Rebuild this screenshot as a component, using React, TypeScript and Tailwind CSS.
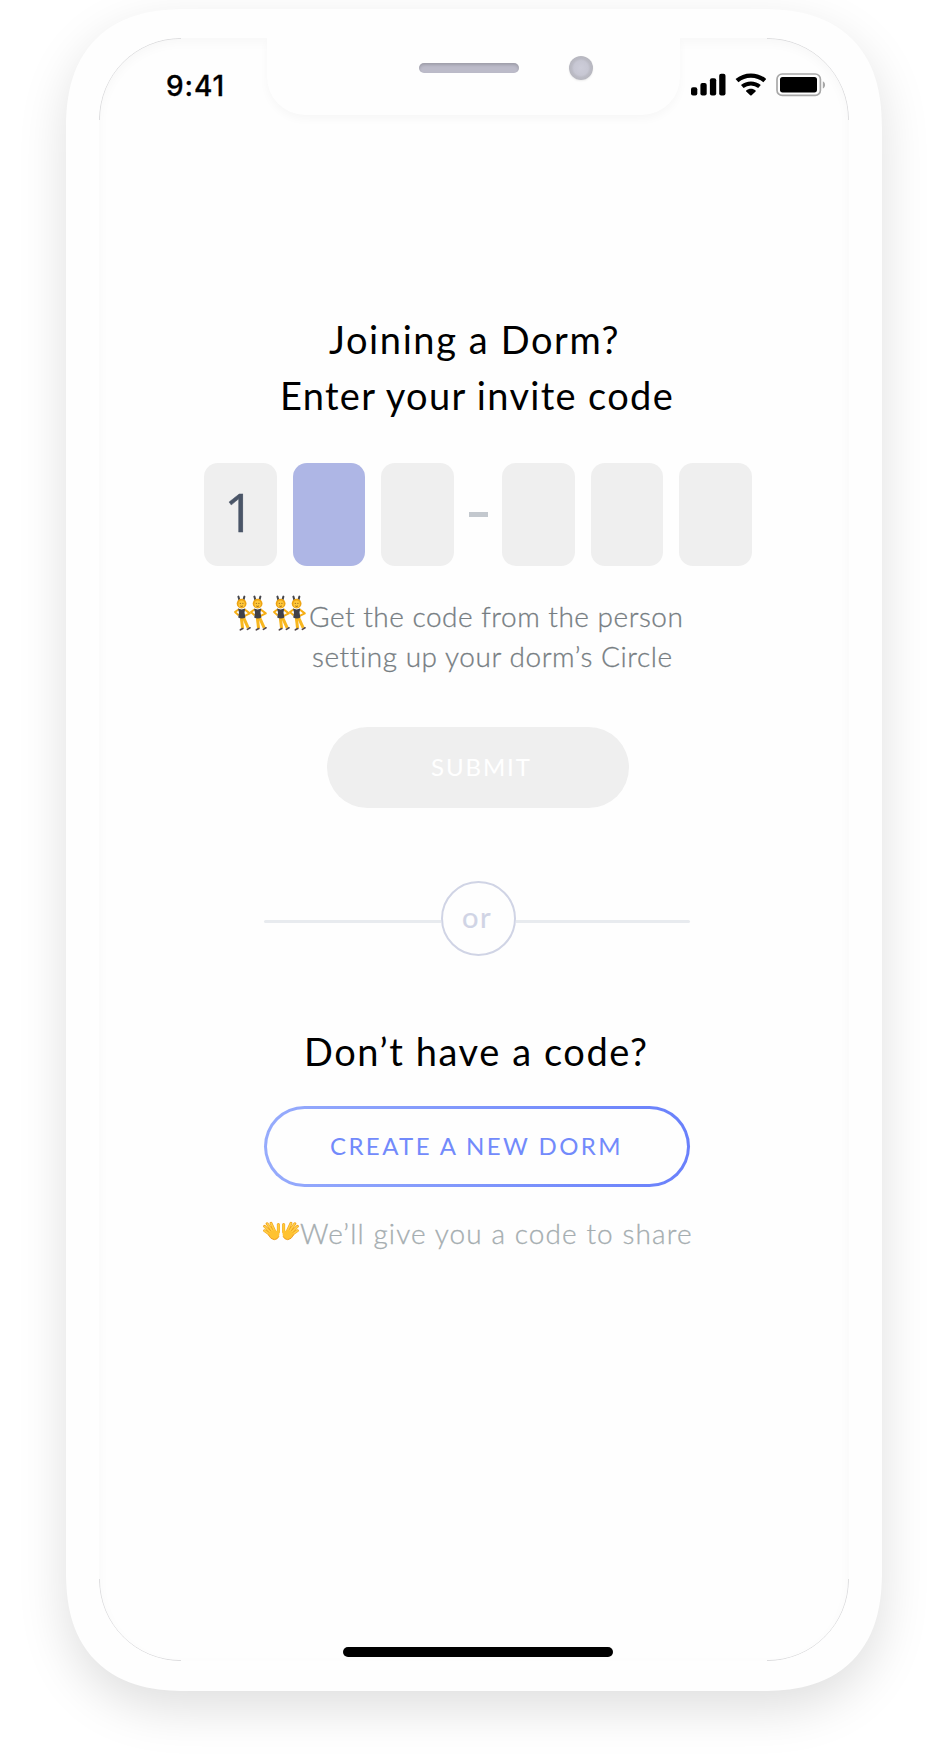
function SignalIcon() {
  return (
    <svg width="35" height="23" viewBox="0 0 35 23" className="block">
      <rect x="0" y="14.2" width="6.3" height="8.3" rx="2" />
      <rect x="9.4" y="10" width="6.3" height="12.5" rx="2" />
      <rect x="18.9" y="5.2" width="6.3" height="17.3" rx="2" />
      <rect x="28.2" y="0.8" width="6.3" height="21.7" rx="2" />
    </svg>
  );
}

function WifiIcon() {
  return (
    <svg width="32" height="23" viewBox="0 0 32 23" className="block">
      <path d="M2 7.7C9.8 .9 22 .9 29.8 7.7" fill="none" stroke="#000" strokeWidth="4.4" />
      <path d="M7.3 13.6C12.2 9.4 19.6 9.4 24.5 13.6" fill="none" stroke="#000" strokeWidth="4" />
      <path d="M11.2 17.4c2.7-2.2 6.7-2.2 9.4 0 .3.3.3.7 0 1l-4 3.8c-.4.4-1 .4-1.4 0l-4-3.8c-.3-.3-.3-.7 0-1z" />
    </svg>
  );
}

function BatteryIcon() {
  return (
    <svg width="50" height="24" viewBox="0 0 50 24" className="block">
      <rect x="1" y="1" width="43.4" height="21.4" rx="5.2" fill="none" stroke="#a8a8a8" strokeWidth="1.7" />
      <rect x="4" y="4" width="37" height="15.4" rx="2.6" />
      <path d="M46.8 8.2c3 1.4 3 6 0 7.4z" fill="#a8a8a8" />
    </svg>
  );
}

function Dancer({ x }: { x: number }) {
  return (
    <g transform={`translate(${x} 0)`}>
      <path d="M5.4 1.6l1 3.6M11.4 1.6l-1 3.6" stroke="#45454b" strokeWidth="2" fill="none" strokeLinecap="round" />
      <path d="M5.8 14.2L2 17l3.6 3.4" stroke="#f6ae14" strokeWidth="1.9" fill="none" strokeLinejoin="round" />
      <path d="M11.4 14.2l5.4 4.2-5 2.4" stroke="#f6ae14" strokeWidth="2" fill="none" strokeLinejoin="round" />
      <path d="M8.2 21.5l1.4 12" stroke="#f8b71f" strokeWidth="3" fill="none" />
      <path d="M10 21.5l5.2 11.3" stroke="#f8b71f" strokeWidth="3" fill="none" />
      <circle cx="8.6" cy="8.6" r="4.9" fill="#eda312" />
      <ellipse cx="8.6" cy="9" rx="3.2" ry="3.5" fill="#ffc83a" />
      <path d="M6.8 8.4h1M9.4 8.4h1M7.4 11q1.2.8 2.4 0" stroke="#80501a" strokeWidth=".9" fill="none" />
      <path d="M5 13.6q3.6 1.6 7.2 0l-.7 3.8.9 5.2q-3.6 1.8-7.2 0l.8-5.2z" fill="#414148" />
      <path d="M7.4 34.8l2.4-1.2M14.4 34.4l2.6-1.6" stroke="#55494a" strokeWidth="1.7" strokeLinecap="round" />
    </g>
  );
}

function DancersIcon() {
  return (
    <svg width="75" height="37" viewBox="0 0 75 37" className="block shrink-0">
      <Dancer x={0} />
      <Dancer x={16} />
      <Dancer x={39} />
      <Dancer x={55} />
    </svg>
  );
}

function Hand() {
  return (
    <g strokeLinecap="round">
      <path d="M15.8 11V3.4" stroke="#f2a51c" strokeWidth="3.1" />
      <path d="M15.8 11V3.6" stroke="#ffca3a" strokeWidth="2" />
      <path d="M7 13.5L1.6 9.6M8 11.5L1.6 5.2M10 10.5L4.2 2.4M12 10L8.2 2" stroke="#f0a01c" strokeWidth="2.9" />
      <path d="M7 13.5L1.7 9.7M8 11.5L1.8 5.4M10 10.5L4.4 2.6M12 10L8.3 2.2" stroke="#ffcf45" strokeWidth="1.7" />
      <path d="M5.6 12.4L11.4 8.4q2 1.6 5.2 1.6.8 4-.8 6.6-1.9 2.8-5.2 2Q7 17.4 5.6 12.4z" fill="#ffc231" />
      <path d="M5.6 14.2q2.2 4.4 6 4.7 3.4-.2 4.7-3.2" fill="none" stroke="#ee9b1d" strokeWidth="1" />
    </g>
  );
}

function OpenHandsIcon() {
  return (
    <svg width="36" height="21" viewBox="0 0 37 21" className="block shrink-0" fill="none">
      <Hand />
      <g transform="translate(37 0) scale(-1 1)">
        <Hand />
      </g>
    </svg>
  );
}

function CornerLines() {
  return (
    <svg
      width="750"
      height="1623"
      viewBox="0 0 750 1623"
      className="pointer-events-none absolute left-0 top-0"
      fill="none"
      stroke="#cdcdd0"
      strokeWidth=".7"
    >
      <path d="M.4 82A81 81 0 0 1 82 .4M668 .4A81 81 0 0 1 749.6 82M749.6 1541A81 81 0 0 1 668 1622.6M82 1622.6A81 81 0 0 1 .4 1541" />
    </svg>
  );
}

function CodeBox({ digit, active }: { digit?: string; active?: boolean }) {
  return (
    <div
      className={
        "flex h-[103px] w-[72.6px] items-center justify-center rounded-[14px] font-['Open_Sans',sans-serif] text-[53px] leading-none text-[#4a5567] [-webkit-text-stroke:0.4px_#4a5567] " +
        (active ? "bg-[#aeb6e5]" : "bg-[#efefef]")
      }
    >
      {digit && <span className="-mt-1.5 pr-0.5">{digit}</span>}
    </div>
  );
}

export default function App() {
  return (
    <div className="h-[1759px] w-[941px] overflow-hidden bg-white pl-[66px] pt-[9px] font-['Lato',sans-serif]">
      <div className="h-[1682px] w-[816px] rounded-[104px] bg-[#fefefe] pl-[33px] pt-[29px] shadow-[0_18px_50px_rgba(0,0,0,0.13)] supports-[corner-shape:squircle]:rounded-[120px] supports-[corner-shape:squircle]:[corner-shape:superellipse(1.27)]">
        <div className="relative flex h-[1623px] w-[750px] flex-col items-start overflow-hidden rounded-[82px] bg-[#fefefe] shadow-[inset_0_4px_12px_rgba(0,0,0,0.03)]">
          <CornerLines />
          <div className="absolute left-[168px] top-0 h-[77px] w-[413px] rounded-b-[38px] bg-[#fefefe] shadow-[0_4px_10px_rgba(0,0,0,0.03)]">
            <div className="absolute left-[152px] top-[25px] h-[10px] w-[100px] rounded-full bg-[#bcbbc9] shadow-[inset_0_2px_3px_rgba(0,0,0,0.16)]" />
            <div className="absolute left-[302px] top-[18px] h-6 w-6 rounded-full bg-[radial-gradient(circle_closest-side,#cdcdd9_0,#c7c7d3_60%,#bbbbc5_78%,#b7b7bf_100%)] shadow-[0_1px_2px_rgba(0,0,0,0.08)]" />
          </div>
          <div className="flex h-[77px] w-full items-start">
            <span className="ml-[67px] mt-[31px] w-[60px] font-['Inter',sans-serif] text-[28px] font-medium leading-[34px] tracking-[0.9px] text-black [-webkit-text-stroke:0.3px_#000]">
              9:41
            </span>
            <div className="ml-[465px] mt-[35px] flex items-start">
              <SignalIcon />
              <div className="ml-[9px]">
                <WifiIcon />
              </div>
              <div className="ml-[9px]">
                <BatteryIcon />
              </div>
            </div>
          </div>

          <h1 className="mt-[196px] whitespace-nowrap text-[38px] font-normal leading-[56px] text-black">
            <span className="ml-[230px] block tracking-[1.6px]">Joining a Dorm?</span>
            <span className="ml-[181px] block tracking-[1.32px]">Enter your invite code</span>
          </h1>

          <div className="ml-[105px] mt-[40px] flex items-center">
            <div className="flex gap-[16px]">
              <CodeBox digit="1" />
              <CodeBox active />
              <CodeBox />
            </div>
            <div className="ml-[15px] mr-[14px] h-[4.5px] w-[19.5px] bg-[#c3c8ce]" />
            <div className="flex gap-[16px]">
              <CodeBox />
              <CodeBox />
              <CodeBox />
            </div>
          </div>

          <div className="ml-[134px] mt-[29px] flex items-start">
            <DancersIcon />
            <p className="ml-[1px] mt-px whitespace-nowrap text-[28px] font-light leading-[40px] text-[#767d82] [-webkit-text-stroke:0.3px_#767d82]">
              <span className="block tracking-[0.52px]">Get the code from the person</span>
              <span className="ml-[3px] block tracking-[0.56px]">setting up your dorm’s Circle</span>
            </p>
          </div>

          <button className="ml-[228px] mt-[51px] flex h-[81px] w-[302px] items-center rounded-full bg-[#efefef] pb-0.5 pl-[104px] text-[24px] tracking-[1.9px] text-white">
            SUBMIT
          </button>

          <div className="ml-[165px] mt-[73px] flex h-[75px] w-[426px] items-center">
            <div className="mt-[6px] h-[3px] w-[177px] rounded-l-full bg-[#e8ebef]" />
            <div className="flex h-[75px] w-[75px] items-center justify-center rounded-full border-[2.5px] border-[#d0d4e5] pb-1 pr-[3px] text-[29px] font-normal tracking-[1.4px] text-[#d0d4e5] [-webkit-text-stroke:0.2px_#d0d4e5]">
              or
            </div>
            <div className="mt-[6px] h-[3px] w-[174px] rounded-r-full bg-[#e8ebef]" />
          </div>

          <h2 className="ml-[205px] mt-[67px] whitespace-nowrap text-[38px] font-normal leading-[56px] tracking-[1.58px] text-black">
            Don’t have a code?
          </h2>

          <button className="ml-[165px] mt-[27px] h-[81px] w-[426px] rounded-full bg-gradient-to-r from-[#96abfc] to-[#6980fb] p-[3px]">
            <span className="flex h-full w-full items-center whitespace-nowrap rounded-full bg-[#fefefe] pb-0.5 pl-[63px] text-[24px] tracking-[2.4px] text-[#728afb]">
              CREATE A NEW DORM
            </span>
          </button>

          <div className="ml-[164px] mt-[26px] flex items-start">
            <div className="pt-[8px]">
              <OpenHandsIcon />
            </div>
            <p className="ml-px whitespace-nowrap text-[28px] font-light leading-[40px] tracking-[1.1px] text-[#a5adb0] [-webkit-text-stroke:0.3px_#a5adb0]">
              We’ll give you a code to share
            </p>
          </div>

          <div className="mb-[4.5px] ml-[244px] mt-auto h-[10px] w-[270px] rounded-full bg-black" />
        </div>
      </div>
    </div>
  );
}
